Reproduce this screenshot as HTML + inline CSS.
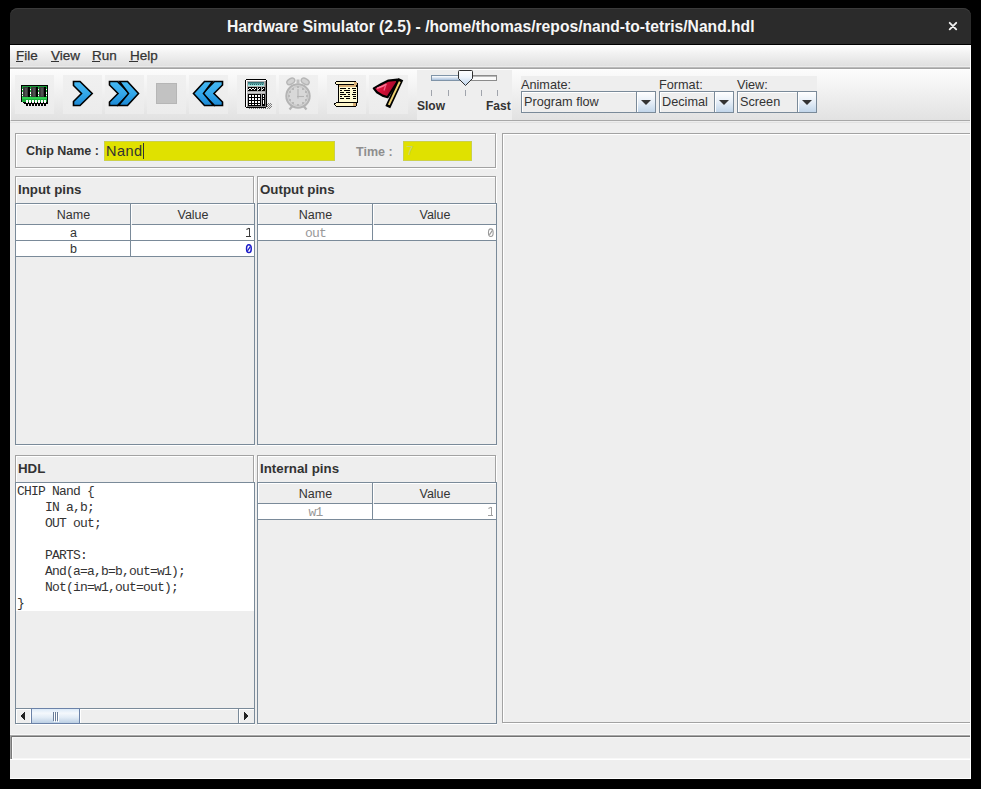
<!DOCTYPE html>
<html><head><meta charset="utf-8">
<style>
*{margin:0;padding:0;box-sizing:border-box}
html,body{width:981px;height:789px;background:#000;overflow:hidden;font-family:"Liberation Sans",sans-serif;position:relative}
.a{position:absolute}
#win{position:absolute;left:10px;top:45px;width:961px;height:734px;background:#eeeeee}
#title{position:absolute;left:10px;top:8px;width:961px;height:37px;background:#2b2b2b;border-bottom:1px solid #000;border-radius:8px 8px 0 0;box-shadow:inset 0 1px 0 #3a3a3a}
#title .t{position:absolute;left:217px;top:10px;font:bold 15.65px "Liberation Sans",sans-serif;color:#f6f6f6;white-space:nowrap}
#menu{position:absolute;left:10px;top:45px;width:961px;height:24px;background:linear-gradient(#ffffff,#f2f2f2 35%,#e0e0e0 91.3%,#ebebeb 91.3%,#ebebeb 95.6%,#bababa 95.6%);border-bottom:1px solid #a4a4a4}
#menu span{position:absolute;top:3px;font-size:13.5px;color:#333;-webkit-text-stroke:0.25px #333}
#menu u{text-decoration:none}
.ul{position:absolute;height:1px;background:#333}
#tool{position:absolute;left:10px;top:69px;width:961px;height:52px;background:linear-gradient(#fcfcfc,#f4f4f4 30%,#e2e2e2);border-top:1px solid #fff;border-left:1px solid #fff;border-bottom:1px solid #a8a8a8}
.btn{position:absolute;top:75px;width:39px;height:39px;background:linear-gradient(#f0f0f0,#ececec)}
.etch{position:absolute;border:1px solid #a2a2a2;box-shadow:1px 1px 0 #fff, inset 1px 1px 0 #fff}
.ttl{position:absolute;font:bold 12.5px "Liberation Sans",sans-serif;color:#333;white-space:nowrap}
.tbl{position:absolute}
.gl{position:absolute;background:#7a8a99}
.hd{position:absolute;background:#eeeeee;box-shadow:inset 1px 1px 0 #fff}
.cell{position:absolute;background:#fff}
.txt{position:absolute;font-size:13px;color:#333;white-space:nowrap}
.mono{font-family:"Liberation Mono",monospace;font-size:11.67px}
.yel{position:absolute;background:#e0e100;border:1px solid #cdd048;box-shadow:0 0 0 1px #e8eef8}
.lbl{position:absolute;font-size:12.7px;color:#333;white-space:nowrap;line-height:15px}
.combo{position:absolute;top:91px;height:22px;border:1px solid #7a8a99;background:#eeeeee;box-shadow:inset 1px 1px 0 #fff}
.combo .ct{position:absolute;left:2px;top:3px;font-size:12.7px;color:#333;white-space:nowrap;line-height:15px}
.combo .cb{position:absolute;top:0;width:19px;height:20px;border-left:1px solid #7a8a99;background:linear-gradient(#ffffff,#e6eef7 50%,#c2d6ea);box-shadow:inset 1px 1px 0 #fff}
.combo .cb:after{content:"";position:absolute;left:4px;top:8px;border-left:5px solid transparent;border-right:5px solid transparent;border-top:5px solid #333}
.ttl2{position:absolute;font:bold 13.3px "Liberation Sans",sans-serif;color:#333;white-space:nowrap;line-height:15px}
.hdt{position:absolute;font-size:12.5px;color:#333;text-align:center;line-height:14px;white-space:nowrap}
.nm{position:absolute;font-size:12.5px;color:#333;text-align:center;line-height:15px}
.nmm{position:absolute;font:13px "Liberation Mono",monospace;letter-spacing:-0.8px;color:#333;text-align:center;line-height:15px}
.vm{position:absolute;font:13px "Liberation Mono",monospace;color:#333;text-align:right;line-height:15px}
.dis{color:#999}
.blue{color:#1818d0}
.hdl{position:absolute;font:13px "Liberation Mono",monospace;letter-spacing:-0.8px;color:#333;line-height:16px;margin:0}
</style></head><body>
<div id="win"></div>
<div id="clip" style="position:absolute;left:0;top:0;width:971px;height:779px;overflow:hidden">
<div id="title"><svg class="a" style="left:926px;top:3px" width="24" height="24" viewBox="936 11 24 24"><path d="M949.7 22.8L956.2 29.3M956.2 22.8L949.7 29.3" stroke="#f0f0f0" stroke-width="1.9" stroke-linecap="round"/></svg><div class="t">Hardware Simulator (2.5) - /home/thomas/repos/nand-to-tetris/Nand.hdl</div></div>
<div id="menu">
  <span style="left:6px"><u>F</u>ile</span>
  <span style="left:41px"><u>V</u>iew</span>
  <span style="left:82px"><u>R</u>un</span>
  <span style="left:120px"><u>H</u>elp</span>
</div>
<div class="ul" style="left:16px;top:61px;width:7px"></div>
<div class="ul" style="left:51px;top:61px;width:8px"></div>
<div class="ul" style="left:92px;top:61px;width:8px"></div>
<div class="ul" style="left:129px;top:61px;width:9px"></div>
<div id="tool"></div>
<div class="a" style="left:10px;top:122px;width:961px;height:1px;background:#e2e2e2"></div>
<!-- toolbar buttons -->
<div class="btn" style="left:15px"></div>
<div class="btn" style="left:63px"></div>
<div class="btn" style="left:105px"></div>
<div class="btn" style="left:147px"></div>
<div class="btn" style="left:189px"></div>
<div class="btn" style="left:237px"></div>
<div class="btn" style="left:279px"></div>
<div class="btn" style="left:327px"></div>
<div class="btn" style="left:369px"></div>
<!-- icons -->
<svg class="a" style="left:0;top:0" width="981" height="130" viewBox="0 0 981 130" shape-rendering="crispEdges">
  <defs>
    <linearGradient id="blu" x1="0" y1="0" x2="0" y2="1">
      <stop offset="0" stop-color="#45b8f2"/><stop offset="0.5" stop-color="#34a8ea"/><stop offset="1" stop-color="#1b88d4"/>
    </linearGradient>
    <linearGradient id="scr" x1="0" y1="0" x2="0" y2="1">
      <stop offset="0" stop-color="#2a6a70"/><stop offset="1" stop-color="#b0fff8"/>
    </linearGradient>
  </defs>
  <!-- RAM -->
  <g transform="translate(21,85)">
    <path d="M0 0H27V19H3V18H2V17H0Z" fill="#000"/>
    <rect x="1" y="1" width="25" height="16" fill="#1fae3e"/>
    <rect x="1" y="12" width="25" height="2" fill="#2fd050"/><rect x="1" y="1" width="25" height="1" fill="#189838"/>
    <rect x="2" y="2" width="6" height="10" fill="#3a3a3a"/><rect x="4" y="3" width="2" height="8" fill="#505050"/><rect x="7" y="2" width="2" height="10" fill="#000"/>
    <rect x="10" y="2" width="6" height="10" fill="#3a3a3a"/><rect x="12" y="3" width="2" height="8" fill="#505050"/><rect x="15" y="2" width="2" height="10" fill="#000"/>
    <rect x="18" y="2" width="6" height="10" fill="#3a3a3a"/><rect x="20" y="3" width="2" height="8" fill="#505050"/><rect x="23" y="2" width="2" height="10" fill="#000"/>
    <g fill="#fff">
      <rect x="1" y="4" width="1" height="1"/><rect x="1" y="7" width="1" height="2"/><rect x="1" y="10" width="1" height="1"/>
      <rect x="9" y="4" width="1" height="1"/><rect x="9" y="7" width="1" height="2"/><rect x="9" y="10" width="1" height="1"/>
      <rect x="17" y="4" width="1" height="1"/><rect x="17" y="7" width="1" height="2"/><rect x="17" y="10" width="1" height="1"/>
      <rect x="25" y="4" width="1" height="1"/><rect x="25" y="7" width="1" height="2"/><rect x="25" y="10" width="1" height="1"/>
      <rect x="5" y="15" width="2" height="3"/><rect x="8" y="15" width="2" height="3"/><rect x="11" y="15" width="2" height="3"/><rect x="14" y="15" width="2" height="3"/><rect x="17" y="15" width="2" height="3"/><rect x="20" y="15" width="2" height="3"/><rect x="23" y="15" width="2" height="3"/>
    </g>
    <g fill="#000">
      <rect x="5" y="19" width="2" height="2"/><rect x="8" y="19" width="2" height="2"/><rect x="11" y="19" width="2" height="2"/><rect x="14" y="19" width="2" height="2"/><rect x="17" y="19" width="2" height="2"/><rect x="20" y="19" width="2" height="2"/><rect x="23" y="19" width="2" height="2"/>
    </g>
  </g>
</svg>
<svg class="a" style="left:0;top:0" width="981" height="130" viewBox="0 0 981 130">
  <!-- step -->
  <path d="M73.5 81.5H80L92.2 93.5L80 105.5H73.5V101.5L81.5 93.5L73.5 85.5Z" fill="url(#blu)" stroke="#000" stroke-width="1.6" stroke-linejoin="miter"/>
  <!-- fast forward -->
  <path d="M109.5 81.5H117.5L129.5 93.5L117.5 105.5H109.5V102L118 93.5L109.5 85Z" fill="url(#blu)" stroke="#000" stroke-width="1.6"/>
  <path d="M119.5 81.5H127.5L138.5 93.5L127.5 105.5H118.5L128.5 93.5Z" fill="url(#blu)" stroke="#000" stroke-width="1.6"/>
  <!-- rewind -->
  <path d="M222.5 81.5H214.5L202.5 93.5L214.5 105.5H222.5V102L214 93.5L222.5 85Z" fill="url(#blu)" stroke="#000" stroke-width="1.6"/>
  <path d="M212.5 81.5H204.5L193.5 93.5L204.5 105.5H213.5L203.5 93.5Z" fill="url(#blu)" stroke="#000" stroke-width="1.6"/>
  <!-- stop -->
  <rect x="156" y="83" width="21" height="21" fill="#c2c2c2"/>
  <rect x="156.5" y="83.5" width="20" height="20" fill="none" stroke="#b6b6b6" stroke-width="1"/>
</svg>

<svg class="a" style="left:0;top:0" width="981" height="130" viewBox="0 0 981 130" shape-rendering="crispEdges">
  <defs>
    <linearGradient id="scr2" x1="0" y1="0" x2="0" y2="1">
      <stop offset="0" stop-color="#2c6068"/><stop offset="0.5" stop-color="#5aa8a8"/><stop offset="1" stop-color="#c0fff8"/>
    </linearGradient>
  </defs>
  <!-- calculator -->
  <g transform="translate(245,79)">
    <g fill="#7a7a7a">
      <rect x="4" y="29" width="1" height="1"/><rect x="6" y="29" width="1" height="1"/><rect x="8" y="29" width="1" height="1"/><rect x="10" y="29" width="1" height="1"/><rect x="12" y="29" width="1" height="1"/><rect x="14" y="29" width="1" height="1"/><rect x="16" y="29" width="1" height="1"/><rect x="18" y="29" width="1" height="1"/><rect x="20" y="29" width="1" height="1"/><rect x="22" y="29" width="1" height="1"/><rect x="24" y="29" width="1" height="1"/>
      <rect x="23" y="28" width="1" height="1"/><rect x="25" y="28" width="1" height="1"/>
      <rect x="22" y="27" width="1" height="1"/><rect x="24" y="27" width="1" height="1"/><rect x="26" y="27" width="1" height="1"/>
      <rect x="23" y="26" width="1" height="1"/><rect x="25" y="26" width="1" height="1"/>
      <rect x="22" y="25" width="1" height="1"/><rect x="24" y="25" width="1" height="1"/><rect x="26" y="25" width="1" height="1"/>
      <rect x="23" y="24" width="1" height="1"/><rect x="25" y="24" width="1" height="1"/>
    </g>
    <path d="M1 0H21V1H22V28H21V29H1V28H0V1H1Z" fill="#000"/>
    <rect x="1" y="1" width="20" height="27" fill="#b0b0b0"/>
    <rect x="1" y="1" width="20" height="1" fill="#fff"/><rect x="1" y="1" width="1" height="27" fill="#fff"/>
    <rect x="2" y="27" width="19" height="1" fill="#808080"/><rect x="20" y="2" width="1" height="26" fill="#808080"/>
    <rect x="3" y="3" width="16" height="4" fill="url(#scr2)"/>
    <g fill="#286068"><rect x="5" y="5" width="1" height="1"/><rect x="7" y="5" width="1" height="1"/><rect x="9" y="5" width="1" height="1"/><rect x="11" y="5" width="1" height="1"/><rect x="13" y="5" width="1" height="1"/><rect x="15" y="5" width="1" height="1"/><rect x="17" y="5" width="1" height="1"/></g>
    <g fill="#000">
      <rect x="3" y="8" width="9" height="4"/><rect x="13" y="8" width="3" height="4"/><rect x="17" y="8" width="3" height="4"/>
      <rect x="3" y="15" width="13" height="12"/>
      <rect x="17" y="15" width="3" height="12"/>
    </g>
    <g fill="#fff">
      <rect x="4" y="9" width="2" height="1"/><rect x="7" y="9" width="2" height="1"/><rect x="10" y="9" width="1" height="1"/><rect x="14" y="9" width="1" height="1"/><rect x="18" y="9" width="1" height="1"/>
      <rect x="3" y="10" width="1" height="1"/><rect x="6" y="10" width="1" height="1"/><rect x="9" y="10" width="1" height="1"/><rect x="13" y="10" width="1" height="1"/><rect x="17" y="10" width="1" height="1"/>
      <rect x="4" y="16" width="2" height="2"/><rect x="7" y="16" width="2" height="2"/><rect x="10" y="16" width="2" height="2"/><rect x="13" y="16" width="2" height="2"/>
      <rect x="4" y="19" width="2" height="2"/><rect x="7" y="19" width="2" height="2"/><rect x="10" y="19" width="2" height="2"/><rect x="13" y="19" width="2" height="2"/>
      <rect x="4" y="22" width="2" height="2"/><rect x="7" y="22" width="2" height="2"/><rect x="10" y="22" width="2" height="2"/><rect x="13" y="22" width="2" height="2"/>
      <rect x="4" y="25" width="2" height="1"/><rect x="7" y="25" width="2" height="1"/><rect x="10" y="25" width="2" height="1"/><rect x="13" y="25" width="2" height="1"/>
      <rect x="18" y="16" width="1" height="2"/><rect x="18" y="19" width="1" height="1"/><rect x="18" y="21" width="1" height="4"/>
    </g>
    <rect x="2" y="13" width="18" height="1" fill="#d0d0d0"/>
  </g>
  <!-- scroll -->
  <g transform="translate(334,80)">
    <rect x="4" y="4" width="20" height="19" fill="#000"/>
    <rect x="5" y="5" width="18" height="17" fill="#fffbd2"/>
    <rect x="5" y="5" width="18" height="2" fill="#d8b078"/>
    <path d="M2 1H22V2H23V3H24V6H23V7H22V5H2V4H1V2H2Z" fill="#000"/>
    <rect x="2" y="2" width="18" height="2" fill="#fff6c8"/>
    <rect x="20" y="2" width="3" height="4" fill="#d8b078"/><rect x="22" y="5" width="1" height="1" fill="#000"/>
    <path d="M2 22H21V23H23V26H22V27H2V26H1V25H0V23H1Z" fill="#000"/>
    <rect x="2" y="23" width="17" height="3" fill="#fff6c8"/><rect x="1" y="24" width="1" height="1" fill="#fff6c8"/>
    <rect x="19" y="23" width="3" height="3" fill="#d8b078"/>
    <g fill="#000">
      <rect x="6" y="8" width="6" height="1"/><rect x="14" y="8" width="2" height="1"/><rect x="18" y="8" width="4" height="1"/>
      <rect x="6" y="10" width="2" height="1"/><rect x="10" y="10" width="6" height="1"/><rect x="19" y="10" width="3" height="1"/>
      <rect x="6" y="12" width="4" height="1"/><rect x="12" y="12" width="4" height="1"/><rect x="19" y="12" width="3" height="1"/>
      <rect x="6" y="14" width="6" height="1"/><rect x="14" y="14" width="2" height="1"/><rect x="18" y="14" width="4" height="1"/>
      <rect x="6" y="16" width="2" height="1"/><rect x="10" y="16" width="6" height="1"/><rect x="19" y="16" width="3" height="1"/>
      <rect x="6" y="18" width="4" height="1"/><rect x="12" y="18" width="4" height="1"/><rect x="19" y="18" width="3" height="1"/>
    </g>
  </g>
</svg>
<svg class="a" style="left:0;top:0" width="981" height="130" viewBox="0 0 981 130">
  <!-- clock (disabled) -->
  <g fill="none" stroke="#b4b4b4">
    <ellipse cx="290.8" cy="81.4" rx="4.3" ry="2.7" transform="rotate(-32 290.8 81.4)" fill="#d2d2d2" stroke="#b6b6b6" stroke-width="1.4"/>
    <ellipse cx="305.2" cy="81.4" rx="4.3" ry="2.7" transform="rotate(32 305.2 81.4)" fill="#d2d2d2" stroke="#b6b6b6" stroke-width="1.4"/>
    <rect x="296.5" y="79.5" width="3" height="4" fill="#c0c0c0" stroke="none"/>
    <line x1="292.5" y1="106" x2="289.5" y2="109.5" stroke-width="2.2"/>
    <line x1="303.5" y1="106" x2="306.5" y2="109.5" stroke-width="2.2"/>
    <circle cx="298" cy="96" r="11.7" fill="#d8d8d8" stroke="#b4b4b4" stroke-width="2"/>
    <circle cx="298" cy="96" r="9.6" fill="none" stroke="#c4c4c4" stroke-width="1"/>
    <line x1="298" y1="89" x2="298" y2="98.5" stroke-width="1.1"/>
    <line x1="297" y1="96.5" x2="304" y2="96.5" stroke-width="1.1"/>
  </g>
  <g fill="#b8b8b8">
    <rect x="297" y="86" width="2" height="2"/><rect x="297" y="104" width="2" height="2"/>
    <rect x="288" y="95" width="2" height="2"/><rect x="306" y="95" width="2" height="2"/>
    <rect x="292" y="88" width="2" height="2"/><rect x="302" y="88" width="2" height="2"/>
    <rect x="289" y="91" width="2" height="2"/><rect x="305" y="91" width="2" height="2"/>
    <rect x="289" y="99" width="2" height="2"/><rect x="305" y="99" width="2" height="2"/>
    <rect x="292" y="102" width="2" height="2"/><rect x="302" y="102" width="2" height="2"/>
  </g>
  <!-- flag -->
  <defs>
    <linearGradient id="flg" x1="0" y1="0" x2="1" y2="0.3">
      <stop offset="0" stop-color="#e8406a"/><stop offset="0.45" stop-color="#d81038"/><stop offset="1" stop-color="#a0082a"/>
    </linearGradient>
  </defs>
  <path d="M373.8 88.4L381 84.3L388.5 80.6L397.5 79.6L397 82.5L387.6 97.2L382.5 95.6L377 92.2Z" fill="url(#flg)" stroke="#000" stroke-width="2.2" stroke-linejoin="round"/>
  <path d="M377 88.3L382.5 86.2L386.5 84.2" stroke="#ff7a9a" stroke-width="1.5" fill="none"/>
  <path d="M385.8 84.8L384 90.5" stroke="#f25a80" stroke-width="1.3" fill="none"/>
  <line x1="400.8" y1="79.2" x2="387.8" y2="107.2" stroke="#000" stroke-width="5.4"/>
  <line x1="399.8" y1="81.6" x2="388.8" y2="104.9" stroke="#ecd070" stroke-width="2"/>
</svg>
<!-- slider panel -->
<div class="a" style="left:417px;top:70px;width:95px;height:50px;background:#eeeeee"></div>
<svg class="a" style="left:417px;top:68px" width="95" height="30" viewBox="417 68 95 30" shape-rendering="crispEdges">
  <defs>
    <linearGradient id="trk" x1="0" y1="0" x2="0" y2="1"><stop offset="0" stop-color="#ffffff"/><stop offset="1" stop-color="#a8c0dc"/></linearGradient>
    <linearGradient id="thm" x1="0" y1="0" x2="0" y2="1"><stop offset="0" stop-color="#ffffff"/><stop offset="0.45" stop-color="#eef4fb"/><stop offset="1" stop-color="#bcd2ea"/></linearGradient>
  </defs>
  <!-- right (unfilled) track -->
  <rect x="465" y="75" width="32" height="6" fill="#8c8c8c"/>
  <rect x="466" y="77" width="30" height="3" fill="#fafafa"/>
  <rect x="466" y="76" width="30" height="1" fill="#b8b8b8"/>
  <!-- left filled track -->
  <rect x="431" y="75" width="34" height="6" fill="#8094a8"/>
  <rect x="432" y="76" width="33" height="4" fill="url(#trk)"/>
  <!-- ticks -->
  <g fill="#a0a4ac"><rect x="431" y="90" width="1" height="6"/><rect x="448" y="90" width="1" height="6"/><rect x="465" y="90" width="1" height="6"/><rect x="481" y="90" width="1" height="6"/><rect x="497" y="90" width="1" height="6"/></g>
</svg>
<svg class="a" style="left:417px;top:68px" width="95" height="30" viewBox="417 68 95 30">
  <path d="M458.5 71.5Q458.5 70.5 459.5 70.5H471.5Q472.5 70.5 472.5 71.5V78.5L465.5 85.5L458.5 78.5Z" fill="url(#thm)" stroke="#303030" stroke-width="1"/>
</svg>
<div class="ttl" style="left:417px;top:99px;font-size:12px">Slow</div>
<div class="ttl" style="left:486px;top:99px;font-size:12px">Fast</div>

<div class="a" style="left:521px;top:76px;width:296px;height:37px;background:#eeeeee"></div>
<div class="lbl" style="left:521px;top:78px">Animate:</div>
<div class="lbl" style="left:659px;top:78px">Format:</div>
<div class="lbl" style="left:737px;top:78px">View:</div>
<div class="combo" style="left:521px;width:135px"><div class="ct">Program flow</div><div class="cb" style="left:114px"></div></div>
<div class="combo" style="left:659px;width:75px"><div class="ct">Decimal</div><div class="cb" style="left:54px"></div></div>
<div class="combo" style="left:737px;width:80px"><div class="ct">Screen</div><div class="cb" style="left:59px"></div></div>

<!-- chip name -->
<div class="etch" style="left:15px;top:133px;width:481px;height:35px"></div>
<div class="ttl" style="left:26px;top:144px">Chip Name :</div>
<div class="yel" style="left:104px;top:141px;width:231px;height:20px"></div>
<div class="txt" style="left:106px;top:143px;font-size:14.5px;letter-spacing:0.5px">Nand</div>
<div class="a" style="left:143px;top:143px;width:1px;height:16px;background:#333"></div>
<div class="ttl" style="left:356px;top:145px;color:#8e8e8e">Time :</div>
<div class="yel" style="left:403px;top:141px;width:69px;height:20px"></div>
<div class="a" style="left:406px;top:144px;font:13px 'Liberation Mono',monospace;color:#c4d27a;line-height:15px">7</div>

<!-- panels -->
<div class="etch" style="left:15px;top:176px;width:239px;height:269px"></div>
<div class="etch" style="left:257px;top:176px;width:239px;height:269px"></div>
<div class="etch" style="left:15px;top:455px;width:239px;height:269px"></div>
<div class="etch" style="left:257px;top:455px;width:239px;height:269px"></div>
<div class="etch" style="left:502px;top:133px;width:480px;height:590px"></div>

<div class="ttl2" style="left:18px;top:182px">Input pins</div>
<div class="ttl2" style="left:260px;top:182px">Output pins</div>
<div class="ttl2" style="left:18px;top:461px">HDL</div>
<div class="ttl2" style="left:260px;top:461px">Internal pins</div>
<div class="a" style="left:15px;top:203px;width:240px;height:242px;border:1px solid #7a8a99;background:#eeeeee"></div>
<div class="hd" style="left:16px;top:204px;width:114px;height:20px"></div>
<div class="hd" style="left:131px;top:204px;width:123px;height:20px"></div>
<div class="gl" style="left:16px;top:224px;width:114px;height:1px"></div>
<div class="gl" style="left:132px;top:224px;width:122px;height:1px"></div>
<div class="gl" style="left:130px;top:204px;width:1px;height:53px"></div>
<div class="hdt" style="left:33.5px;top:208px;width:80px">Name</div>
<div class="hdt" style="left:153.0px;top:208px;width:80px">Value</div>
<div class="cell" style="left:16px;top:225px;width:114px;height:15px"></div>
<div class="cell" style="left:131px;top:225px;width:123px;height:15px"></div>
<div class="gl" style="left:16px;top:240px;width:238px;height:1px"></div>
<div class="nm" style="left:33.5px;top:226px;width:80px">a</div>
<svg class="a" style="left:242px;top:225px" width="11" height="15" viewBox="242 225 11 15" shape-rendering="crispEdges"><rect x="248.6" y="228" width="1.5" height="8" fill="#3a3a3a"/><rect x="246.0" y="236" width="5.4" height="1.1" fill="#3a3a3a"/></svg>
<svg class="a" style="left:242px;top:225px" width="11" height="15" viewBox="242 225 11 15"><path d="M246.4 229.6L249.1 228.3" stroke="#3a3a3a" stroke-width="1.1"/></svg>
<div class="cell" style="left:16px;top:241px;width:114px;height:15px"></div>
<div class="cell" style="left:131px;top:241px;width:123px;height:15px"></div>
<div class="gl" style="left:16px;top:256px;width:238px;height:1px"></div>
<div class="nm" style="left:33.5px;top:242px;width:80px">b</div>
<svg class="a" style="left:242px;top:241px" width="11" height="15" viewBox="242 241 11 15"><ellipse cx="248.9" cy="248.7" rx="2.35" ry="3.85" fill="none" stroke="#1c1cc8" stroke-width="1.5"/><path d="M247.5 250.79999999999998L250.3 246.6" stroke="#1c1cc8" stroke-width="1.2"/></svg>
<div class="a" style="left:257px;top:203px;width:240px;height:242px;border:1px solid #7a8a99;background:#eeeeee"></div>
<div class="hd" style="left:258px;top:204px;width:114px;height:20px"></div>
<div class="hd" style="left:373px;top:204px;width:123px;height:20px"></div>
<div class="gl" style="left:258px;top:224px;width:114px;height:1px"></div>
<div class="gl" style="left:374px;top:224px;width:122px;height:1px"></div>
<div class="gl" style="left:372px;top:204px;width:1px;height:37px"></div>
<div class="hdt" style="left:275.5px;top:208px;width:80px">Name</div>
<div class="hdt" style="left:395.0px;top:208px;width:80px">Value</div>
<div class="cell" style="left:258px;top:225px;width:114px;height:15px"></div>
<div class="cell" style="left:373px;top:225px;width:123px;height:15px"></div>
<div class="gl" style="left:258px;top:240px;width:238px;height:1px"></div>
<div class="nmm dis" style="left:275.5px;top:226px;width:80px">out</div>
<svg class="a" style="left:484px;top:225px" width="11" height="15" viewBox="484 225 11 15"><ellipse cx="490.8" cy="232.7" rx="2.35" ry="3.85" fill="none" stroke="#9a9a9a" stroke-width="1.1"/><path d="M489.40000000000003 234.79999999999998L492.2 230.6" stroke="#9a9a9a" stroke-width="1.2"/></svg>
<div class="a" style="left:257px;top:482px;width:240px;height:242px;border:1px solid #7a8a99;background:#eeeeee"></div>
<div class="hd" style="left:258px;top:483px;width:114px;height:20px"></div>
<div class="hd" style="left:373px;top:483px;width:123px;height:20px"></div>
<div class="gl" style="left:258px;top:503px;width:114px;height:1px"></div>
<div class="gl" style="left:374px;top:503px;width:122px;height:1px"></div>
<div class="gl" style="left:372px;top:483px;width:1px;height:37px"></div>
<div class="hdt" style="left:275.5px;top:487px;width:80px">Name</div>
<div class="hdt" style="left:395.0px;top:487px;width:80px">Value</div>
<div class="cell" style="left:258px;top:504px;width:114px;height:15px"></div>
<div class="cell" style="left:373px;top:504px;width:123px;height:15px"></div>
<div class="gl" style="left:258px;top:519px;width:238px;height:1px"></div>
<div class="nmm dis" style="left:275.5px;top:505px;width:80px">w1</div>
<svg class="a" style="left:484px;top:504px" width="11" height="15" viewBox="484 504 11 15" shape-rendering="crispEdges"><rect x="490.6" y="507" width="1.5" height="8" fill="#a0a0a0"/><rect x="488.0" y="515" width="5.4" height="1.1" fill="#a0a0a0"/></svg>
<svg class="a" style="left:484px;top:504px" width="11" height="15" viewBox="484 504 11 15"><path d="M488.4 508.6L491.1 507.3" stroke="#a0a0a0" stroke-width="1.1"/></svg>

<!-- HDL -->
<div class="a" style="left:15px;top:482px;width:240px;height:242px;border:1px solid #7a8a99;background:#eeeeee"></div>
<div class="a" style="left:16px;top:483px;width:238px;height:128px;background:#fff"></div>
<pre class="hdl" style="left:17px;top:484px">CHIP Nand {
    IN a,b;
    OUT out;

    PARTS:
    And(a=a,b=b,out=w1);
    Not(in=w1,out=out);
}</pre>
<!-- scrollbar -->
<div class="a" style="left:16px;top:708px;width:238px;height:15px;background:#eeeeee;border-top:1px solid #7a8a99"></div>
<div class="a" style="left:80px;top:709px;width:158px;height:1px;background:#fff"></div>
<div class="a" style="left:80px;top:709px;width:1px;height:14px;background:#fff"></div>
<!-- left button -->
<div class="a" style="left:16px;top:709px;width:15px;height:14px;background:#eeeeee;box-shadow:inset 1px 1px 0 #fff, inset -1px 0 0 #fff"></div>
<svg class="a" style="left:16px;top:709px" width="15" height="14" viewBox="0 0 15 14" shape-rendering="crispEdges"><g fill="#222"><rect x="5" y="6" width="1" height="2"/><rect x="6" y="5" width="1" height="4"/><rect x="7" y="4" width="1" height="6"/><rect x="8" y="3" width="1" height="8"/></g></svg>
<!-- thumb -->
<div class="a" style="left:31px;top:708px;width:49px;height:16px;border:1px solid #6b82a8;background:linear-gradient(#dceaf8,#f4f8fc 30%,#e2ecf6 60%,#bccfe4)"></div>
<svg class="a" style="left:31px;top:708px" width="49" height="16" viewBox="0 0 49 16" shape-rendering="crispEdges">
  <g fill="#6a7d99"><rect x="22" y="4" width="1" height="9"/><rect x="24" y="4" width="1" height="9"/><rect x="26" y="4" width="1" height="9"/></g>
  <g fill="#fff"><rect x="23" y="5" width="1" height="9"/><rect x="25" y="5" width="1" height="9"/><rect x="27" y="5" width="1" height="9"/></g>
</svg>
<!-- right button -->
<div class="a" style="left:238px;top:709px;width:16px;height:14px;background:#eeeeee;border-left:1px solid #7a8a99;box-shadow:inset 1px 1px 0 #fff"></div>
<svg class="a" style="left:238px;top:709px" width="16" height="14" viewBox="0 0 16 14" shape-rendering="crispEdges"><g fill="#222"><rect x="6" y="3" width="1" height="8"/><rect x="7" y="4" width="1" height="6"/><rect x="8" y="5" width="1" height="4"/><rect x="9" y="6" width="1" height="2"/></g></svg>
<!-- status bar -->
<div class="a" style="left:10px;top:734px;width:961px;height:1px;background:#f8f8f8"></div>
<div class="a" style="left:10px;top:735px;width:961px;height:1px;background:#a8a8a8"></div>
<div class="a" style="left:10px;top:736px;width:961px;height:1px;background:#727272"></div>
<div class="a" style="left:10px;top:736px;width:1px;height:23px;background:#a4a4a4"></div>
<div class="a" style="left:11px;top:736px;width:1px;height:23px;background:#7a7a7a"></div>
<div class="a" style="left:12px;top:737px;width:1px;height:22px;background:#fff"></div>
<div class="a" style="left:12px;top:737px;width:959px;height:1px;background:#f6f6f6"></div>
<div class="a" style="left:12px;top:758px;width:959px;height:1px;background:#f8f8f8"></div>
<div class="a" style="left:10px;top:759px;width:961px;height:1px;background:#fff"></div>
</div>
<div class="a" style="left:970px;top:45px;width:1px;height:734px;background:#fff"></div>
<div class="a" style="left:10px;top:778px;width:961px;height:1px;background:#fff"></div>
</body></html>
